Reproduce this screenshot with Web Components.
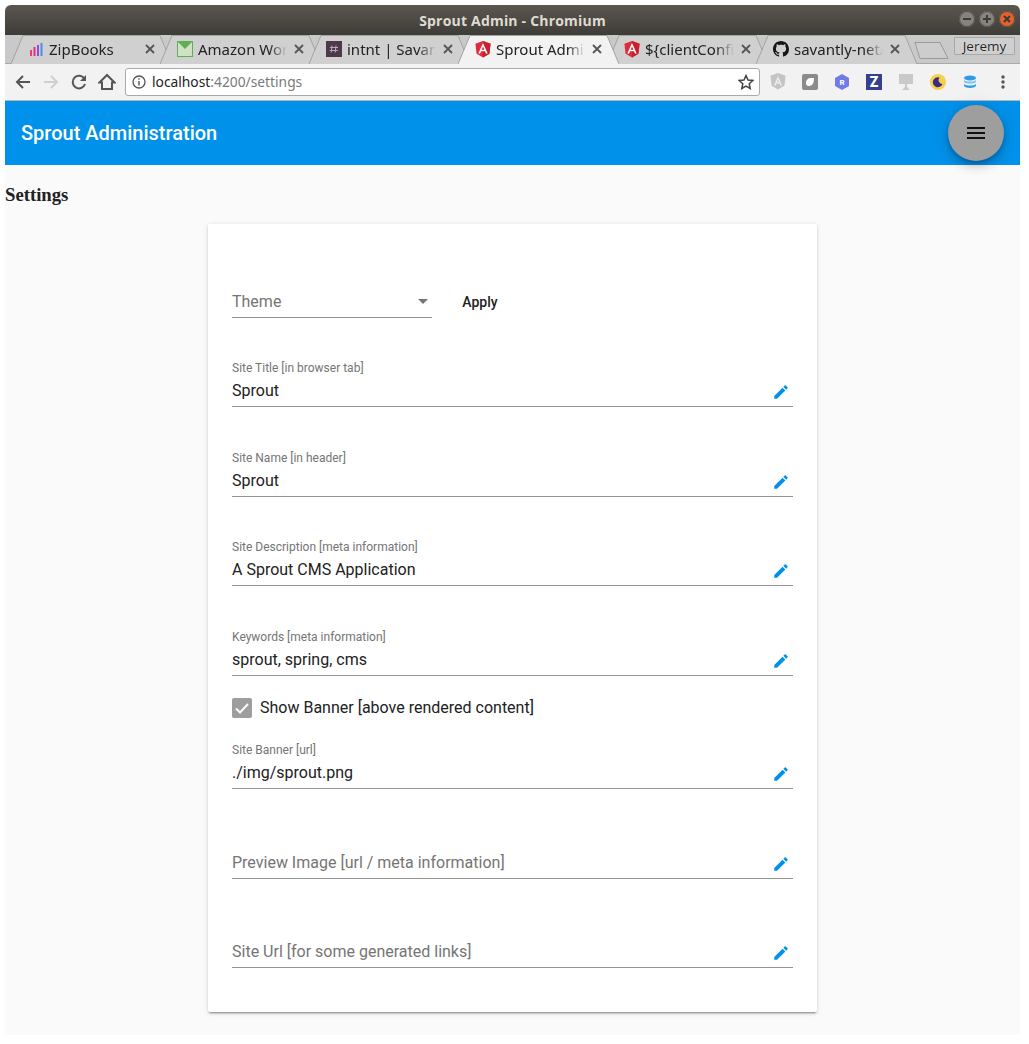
<!DOCTYPE html>
<html>
<head>
<meta charset="utf-8">
<title>Sprout Admin</title>
<style>
  html, body { margin: 0; background: #fff; }
  body { padding: 5px 9px 9px 5px; font-family: Roboto, sans-serif; }
</style>
</head>
<body>
<browser-window>
  <title-bar slot="chrome">Sprout Admin - Chromium</title-bar>
  <tab-strip slot="chrome">
    <browser-tab icon="zip">ZipBooks</browser-tab>
    <browser-tab icon="mail">Amazon WorkMail</browser-tab>
    <browser-tab icon="slack">intnt | Savantly</browser-tab>
    <browser-tab icon="angular" active>Sprout Admin</browser-tab>
    <browser-tab icon="angular">${clientConfig}</browser-tab>
    <browser-tab icon="github">savantly-net/sprout</browser-tab>
  </tab-strip>
  <nav-bar slot="chrome"></nav-bar>

  <app-header>Sprout Administration</app-header>
  <settings-page>
    <theme-row></theme-row>
    <edit-field label="Site Title [in browser tab]" value="Sprout"></edit-field>
    <edit-field label="Site Name [in header]" value="Sprout"></edit-field>
    <edit-field label="Site Description [meta information]" value="A Sprout CMS Application"></edit-field>
    <edit-field label="Keywords [meta information]" value="sprout, spring, cms"></edit-field>
    <check-row>Show Banner [above rendered content]</check-row>
    <edit-field label="Site Banner [url]" value="./img/sprout.png"></edit-field>
    <edit-field label="Preview Image [url / meta information]"></edit-field>
    <edit-field label="Site Url [for some generated links]"></edit-field>
  </settings-page>
</browser-window>

<script>
const ANGULAR = `<svg width="16" height="17" viewBox="0 0 16 17"><path fill="#e02b3c" d="M8 0 .4 2.7l1.2 10L8 16.5l6.4-3.8 1.2-10z"/><path fill="#c9202f" d="M8 0v16.5l6.4-3.8 1.2-10z"/><path fill="#fff" d="M8 2 3.3 12.6h1.8l.9-2.4h4l.9 2.4h1.8zm1.4 6.7H6.6L8 5.4z"/></svg>`;

const TAB_ICONS = {
  zip: `<svg width="16" height="16" viewBox="0 0 16 16"><rect x="2" y="9" width="2" height="6" fill="#ef3b6e"/><rect x="5.500" y="6" width="2" height="9" fill="#e0337a"/><rect x="9" y="4" width="2" height="11" fill="#8a4de8"/><rect x="12.500" y="2" width="2" height="13" fill="#4f8fd8"/></svg>`,
  mail: `<svg width="16" height="16" viewBox="0 0 16 16"><rect x=".5" y=".5" width="15" height="15" fill="#cfe3c4" stroke="#5fb053"/><path d="M1 1h14L8 8z" fill="#5fb053"/></svg>`,
  slack: `<svg width="16" height="16" viewBox="0 0 16 16"><rect width="16" height="16" fill="#4d394b"/><path d="M6 4.500 5.200 11.500M10 4.500l-.8 7M4 6.500h8M3.800 9.500h8" stroke="#b9a9b7" fill="none"/></svg>`,
  angular: ANGULAR,
  github: `<svg width="16" height="16" viewBox="0 0 16 16"><path fill="#161614" d="M8 0C3.580 0 0 3.580 0 8c0 3.540 2.290 6.530 5.470 7.590.4.070.55-.17.55-.38 0-.19-.010-.82-.010-1.490-2.010.37-2.530-.49-2.690-.94-.090-.23-.48-.94-.82-1.130-.28-.15-.68-.52-.010-.53.630-.010 1.080.58 1.230.82.720 1.210 1.870.87 2.330.66.070-.52.280-.87.510-1.070-1.780-.2-3.640-.89-3.640-3.950 0-.87.310-1.590.82-2.150-.080-.2-.36-1.020.080-2.120 0 0 .67-.21 2.200.82.640-.18 1.320-.27 2-.27s1.360.090 2 .27c1.530-1.040 2.200-.82 2.200-.82.440 1.100.16 1.920.080 2.120.51.560.82 1.270.82 2.150 0 3.070-1.870 3.750-3.650 3.950.29.250.54.730.54 1.480 0 1.070-.010 1.930-.010 2.200 0 .21.150.46.55.38A8.010 8.010 0 0 0 16 8c0-4.420-3.580-8-8-8z"/></svg>`
};

class BrowserWindow extends HTMLElement {
  constructor() {
    super();
    this.attachShadow({ mode: "open" }).innerHTML = `
      <style>
        :host { display: flex; flex-direction: column; width: 1015px; height: 1030px; background: #fafafa; }
        .chrome { display: block; }
        .body { flex: 1; display: flex; flex-direction: column; min-height: 0; }
      </style>
      <div class="chrome"><slot name="chrome"></slot></div>
      <div class="body"><slot></slot></div>
    `;
  }
}

class TitleBar extends HTMLElement {
  constructor() {
    super();
    this.attachShadow({ mode: "open" }).innerHTML = `
      <style>
        :host {
          display: flex; align-items: center; justify-content: center; position: relative;
          height: 30px; border-radius: 6px 6px 0 0;
          background: linear-gradient(#5b5750, #3e3c37);
          color: #dfdbd2; font: bold 14px "Open Sans", sans-serif; letter-spacing: .2px;
        }
        .ctl { position: absolute; right: 5px; top: 6px; display: flex; gap: 4px; }
        .ctl span {
          width: 16px; height: 16px; border-radius: 50%; background: #86837d;
          display: flex; align-items: center; justify-content: center;
          box-shadow: inset 0 0 0 1px #55524c;
        }
        .ctl .x { background: #e8602c; }
      </style>
      <slot></slot>
      <div class="ctl">
        <span><svg width="10" height="10"><path d="M1 5h8" stroke="#3c3b37" stroke-width="2"/></svg></span>
        <span><svg width="10" height="10"><path d="M1 5h8M5 1v8" stroke="#3c3b37" stroke-width="2"/></svg></span>
        <span class="x"><svg width="10" height="10"><path d="m2 2 6 6M8 2 2 8" stroke="#3c3b37" stroke-width="2"/></svg></span>
      </div>
    `;
  }
}

class TabStrip extends HTMLElement {
  constructor() {
    super();
    this.attachShadow({ mode: "open" }).innerHTML = `
      <style>
        :host {
          display: flex; position: relative; height: 29px; padding-left: 6px; box-sizing: border-box;
          background: #c9c9c9; border-bottom: 1px solid #a9a9a9;
        }
        .new { position: absolute; left: 909px; top: 7px; }
        .user {
          position: absolute; right: 5px; top: 2px; width: 61px; height: 18px; box-sizing: border-box;
          border: 1px solid #a8a8a8; background: #cfcfcf; border-radius: 1px;
          font: 13.500px/16px "Open Sans", sans-serif; text-align: center; color: #222;
          text-shadow: 0 0 1px #fff;
        }
      </style>
      <slot></slot>
      <svg class="new" width="35" height="18"><path d="M1 .5h25l8 16H6z" fill="#cdcdcd" stroke="#9a9a9a"/></svg>
      <div class="user">Jeremy</div>
    `;
  }
}

class BrowserTab extends HTMLElement {
  constructor() {
    super();
    const active = this.hasAttribute("active");
    const fill = active ? "#f2f2f2" : "#d0d0d0";
    this.attachShadow({ mode: "open" }).innerHTML = `
      <style>
        :host {
          display: flex; align-items: center; position: relative; box-sizing: border-box;
          width: 161px; height: 29px; margin-right: -12px; padding: 0 17px 1px 17px; gap: 5px;
          font: 15px "Noto Sans", sans-serif; color: #222; z-index: ${active ? 2 : 1};
        }
        .shape { position: absolute; inset: 0; z-index: -1; }
        .label {
          flex: 1; overflow: hidden; white-space: nowrap;
          -webkit-mask-image: linear-gradient(to right, #000 78%, transparent 98%);
          mask-image: linear-gradient(to right, #000 78%, transparent 98%);
        }
        .icon { display: flex; flex: none; }
        .close { flex: none; display: flex; }
      </style>
      <svg class="shape" width="161" height="29"><path d="M0 29 12 .5h137l12 28.500" fill="${fill}" stroke="#a3a3a3"/></svg>
      <span class="icon">${TAB_ICONS[this.getAttribute("icon")] || ""}</span>
      <span class="label"><slot></slot></span>
      <svg class="close" width="10" height="10"><path d="m1 1 8 8M9 1 1 9" stroke="#555" stroke-width="1.800"/></svg>
    `;
  }
}

class NavBar extends HTMLElement {
  constructor() {
    super();
    this.attachShadow({ mode: "open" }).innerHTML = `
      <style>
        :host {
          display: flex; align-items: center; height: 37px; box-sizing: border-box; padding: 0 15px 1px 9px;
          background: #f2f2f2; border-bottom: 1px solid #b5b5b5;
        }
        .btns { display: flex; gap: 10px; margin-right: 9px; align-items: center; }
        svg { flex: none; display: block; }
        .omni {
          flex: 1; height: 28px; box-sizing: border-box; display: flex; align-items: center; gap: 6px;
          padding: 0 5px 0 6px; background: #fff; border: 1px solid #aaa; border-radius: 3px;
          font: 13.800px "Noto Sans", sans-serif; color: #7a7a7a;
        }
        .omni b { font-weight: 400; color: #222; }
        .url { flex: 1; }
        .exts { display: flex; align-items: center; gap: 16px; margin-left: 10px; }
        .more { margin-left: 7px; }
      </style>
      <div class="btns">
        <svg width="18" height="18" viewBox="0 0 18 18"><path d="M16 9H3M9 3 3 9l6 6" fill="none" stroke="#555" stroke-width="2"/></svg>
        <svg width="18" height="18" viewBox="0 0 18 18"><path d="M2 9h13M9 3l6 6-6 6" fill="none" stroke="#cfcfcf" stroke-width="2"/></svg>
        <svg width="18" height="18" viewBox="0 0 18 18"><path d="M14.500 6A6.300 6.300 0 1 0 15 11" fill="none" stroke="#555" stroke-width="2"/><path d="M16 2v6h-6z" fill="#555"/></svg>
        <svg width="18" height="18" viewBox="0 0 18 18"><path d="M9 2 1.500 9.500H4V16h10V9.500h2.500z" fill="none" stroke="#555" stroke-width="2"/></svg>
      </div>
      <div class="omni">
        <svg width="14" height="14" viewBox="0 0 14 14"><circle cx="7" cy="7" r="6" fill="none" stroke="#555" stroke-width="1.300"/><path d="M7 6v4.500M7 3.200v1.500" stroke="#555" stroke-width="1.400"/></svg>
        <span class="url"><b>localhost</b>:4200/settings</span>
        <svg width="16" height="16" viewBox="0 0 16 16"><path d="m8 1.500 2 4.500 4.800.5-3.600 3.200 1 4.800L8 12l-4.200 2.500 1-4.800L1.200 6.500 6 6z" fill="none" stroke="#444" stroke-width="1.500"/></svg>
      </div>
      <div class="exts">
        <svg width="16" height="17" viewBox="0 0 16 17"><path fill="#c4c4c4" d="M8 0 .4 2.700l1.200 10L8 16.500l6.400-3.800 1.200-10z"/><path fill="#eee" d="M8 3 4 12.500h1.600l.8-2h3.200l.8 2H12zm1 6.200H7L8 6.500z"/></svg>
        <svg width="16" height="16" viewBox="0 0 16 16"><rect width="16" height="16" rx="2" fill="#8b8b8b"/><path d="M4 9c0-3 2-5 5-5h3c0 4-1 8-5 8-2 0-3-1-3-3z" fill="#fff"/></svg>
        <svg width="16" height="16" viewBox="0 0 16 16"><path d="m8 0 7 4v8l-7 4-7-4V4z" fill="#6f7ce8"/><text x="8" y="11" font-size="8" font-weight="700" font-family="Roboto" fill="#fff" text-anchor="middle">R</text></svg>
        <svg width="16" height="16" viewBox="0 0 16 16"><rect width="16" height="16" fill="#36408f"/><text x="8" y="13" font-size="14" font-weight="900" font-family="Roboto" fill="#fff" text-anchor="middle">Z</text></svg>
        <svg width="16" height="16" viewBox="0 0 16 16"><path d="M1 0h14v10H9v3l3 3H4l3-3v-3H1z" fill="#c9c9c9"/></svg>
        <svg width="16" height="16" viewBox="0 0 16 16"><circle cx="8" cy="8" r="8" fill="#f7d04b"/><path d="M9.500 3.500A5 5 0 1 0 12.500 10 4 4 0 0 1 9.500 3.500z" fill="#3b2a86"/></svg>
        <svg width="16" height="16" viewBox="0 0 16 16"><ellipse cx="8" cy="4" rx="6" ry="2.500" fill="#2f9be8"/><path d="M2 6c2 2 10 2 12 0v2c-2 2-10 2-12 0z" fill="#7cc5f2"/><path d="M2 10c2 2 10 2 12 0v2c-2 2.500-10 2.500-12 0z" fill="#2f9be8"/></svg>
        <svg class="more" width="4" height="16" viewBox="0 0 4 16"><circle cx="2" cy="3" r="1.700" fill="#555"/><circle cx="2" cy="8" r="1.700" fill="#555"/><circle cx="2" cy="13" r="1.700" fill="#555"/></svg>
      </div>
    `;
  }
}

class AppHeader extends HTMLElement {
  constructor() {
    super();
    this.attachShadow({ mode: "open" }).innerHTML = `
      <style>
        :host {
          display: flex; align-items: center; justify-content: space-between; flex: none;
          height: 64px; padding: 0 16px; background: #0091ea; color: #fff;
          font: 500 20px Roboto, sans-serif;
        }
        button {
          width: 56px; height: 56px; border: 0; border-radius: 50%; padding: 0; background: #9e9e9e;
          display: flex; align-items: center; justify-content: center;
          box-shadow: 0 3px 5px -1px rgba(0,0,0,.2), 0 6px 10px 0 rgba(0,0,0,.14), 0 1px 18px 0 rgba(0,0,0,.12);
        }
      </style>
      <slot></slot>
      <button type="button">
        <svg width="24" height="24" viewBox="0 0 24 24"><path fill="#111" d="M3 18h18v-2H3v2zm0-5h18v-2H3v2zm0-7v2h18V6H3z"/></svg>
      </button>
    `;
  }
}

class SettingsPage extends HTMLElement {
  constructor() {
    super();
    this.attachShadow({ mode: "open" }).innerHTML = `
      <style>
        :host { display: block; flex: 1; }
        h3 { margin: 19px 0; font: bold 18.720px/21px "Liberation Serif", serif; color: #212121; }
        .card {
          width: 60%; margin: 0 auto; box-sizing: border-box; height: 788px;
          padding: 45px 24px 0; background: #fff; border-radius: 2px;
          box-shadow: 0 3px 1px -2px rgba(0,0,0,.2), 0 2px 2px 0 rgba(0,0,0,.14), 0 1px 5px 0 rgba(0,0,0,.12);
        }
      </style>
      <h3>Settings</h3>
      <div class="card"><slot></slot></div>
    `;
  }
}

class ThemeRow extends HTMLElement {
  constructor() {
    super();
    this.attachShadow({ mode: "open" }).innerHTML = `
      <style>
        :host { display: flex; align-items: center; gap: 16px; height: 49px; margin-bottom: -0.600px; }
        .select {
          width: 200px; height: 49px; box-sizing: border-box; display: flex; align-items: flex-end;
          justify-content: space-between; padding: 0 4px 3px 0; border-bottom: 1px solid #949494;
          font: 16px/24px Roboto, sans-serif; color: #757575;
        }
        .arrow { width: 0; height: 0; border: 5px solid transparent; border-top-color: #757575; border-bottom: 0; margin-bottom: 10px; }
        button {
          width: 64px; height: 36px; border: 0; padding: 0; margin-top: 16px; background: none; color: #212121;
          font: 500 14px Roboto, sans-serif;
        }
      </style>
      <div class="select"><span>Theme</span><span class="arrow"></span></div>
      <button type="button">Apply</button>
    `;
  }
}

class EditField extends HTMLElement {
  static get observedAttributes() {
    return ["label", "value"];
  }

  constructor() {
    super();
    this.attachShadow({ mode: "open" });
    this.render();
  }

  attributeChangedCallback(attr, oldValue, newValue) {
    if (oldValue === newValue) return;
    this.render();
  }

  render() {
    const label = this.getAttribute("label") || "";
    const value = this.getAttribute("value") || "";
    this.shadowRoot.innerHTML = `
      <style>
        :host { display: flex; flex-direction: column; justify-content: flex-end; height: 89.600px; box-sizing: border-box; }
        .box { display: flex; flex-direction: column; border-bottom: 1px solid #949494; padding-bottom: 3px; }
        .label { font: 12px/14px Roboto, sans-serif; color: #757575; height: 14px; white-space: nowrap; }
        .row { display: flex; align-items: center; justify-content: space-between; height: 24px; margin-top: 4px; }
        .value { font: 16px/24px Roboto, sans-serif; color: #212121; }
        .ph { font: 16px/24px Roboto, sans-serif; color: #757575; }
        svg { display: block; margin: 2px 3px 0 0; }
      </style>
      ${value ? `<span class="label">${label}</span>` : ""}
      <div class="box">
        <div class="row">
          ${value ? `<span class="value">${value}</span>` : `<span class="ph">${label}</span>`}
          <svg width="18" height="18" viewBox="0 0 24 24"><path fill="#0091ea" d="M3 17.250V21h3.750L17.810 9.940l-3.750-3.750L3 17.250zM20.710 7.040c.39-.39.39-1.020 0-1.410l-2.340-2.340c-.39-.39-1.020-.39-1.410 0l-1.830 1.830 3.750 3.750 1.830-1.830z"/></svg>
        </div>
      </div>
    `;
  }
}

class CheckRow extends HTMLElement {
  constructor() {
    super();
    this.attachShadow({ mode: "open" }).innerHTML = `
      <style>
        :host {
          display: flex; align-items: center; gap: 8px; height: 23.600px; padding-top: 20px; margin-bottom: -20px;
          font: 16px/24px Roboto, sans-serif; color: #212121;
        }
        .box { width: 20px; height: 20px; background: #9e9e9e; border-radius: 2px; display: flex; align-items: center; justify-content: center; }
      </style>
      <span class="box"><svg width="16" height="16" viewBox="0 0 16 16"><path d="m2 8.500 4 4 8-8.500" fill="none" stroke="#fafafa" stroke-width="2"/></svg></span>
      <slot></slot>
    `;
  }
}

customElements.define("browser-window", BrowserWindow);
customElements.define("title-bar", TitleBar);
customElements.define("tab-strip", TabStrip);
customElements.define("browser-tab", BrowserTab);
customElements.define("nav-bar", NavBar);
customElements.define("app-header", AppHeader);
customElements.define("settings-page", SettingsPage);
customElements.define("theme-row", ThemeRow);
customElements.define("edit-field", EditField);
customElements.define("check-row", CheckRow);
</script>
</body>
</html>
